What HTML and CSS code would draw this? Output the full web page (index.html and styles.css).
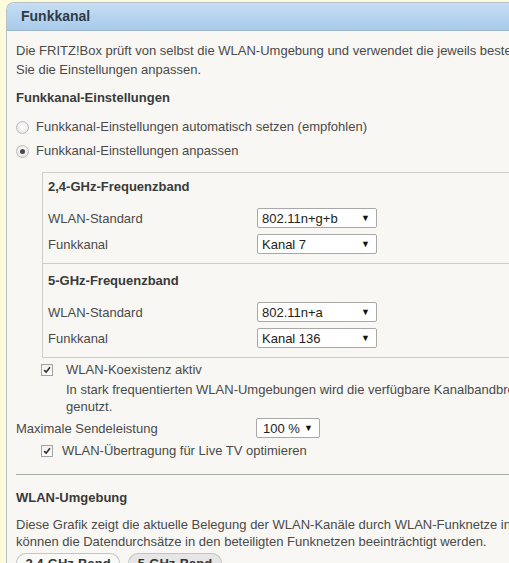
FILE: index.html
```html
<!DOCTYPE html>
<html lang="de">
<head>
<meta charset="utf-8">
<title>Funkkanal</title>
<link rel="stylesheet" href="styles.css">
</head>
<body>
<div class="panel">
  <div class="panel-head">Funkkanal</div>
  <div class="panel-body">
    <p class="intro">Die FRITZ!Box prüft von selbst die WLAN-Umgebung und verwendet die jeweils besten Funkkanäle. Bei Bedarf können<br>Sie die Einstellungen anpassen.</p>
    <h3 class="h-settings">Funkkanal-Einstellungen</h3>
    <div class="radio-row first"><span class="radio"></span><span>Funkkanal-Einstellungen automatisch setzen (empfohlen)</span></div>
    <div class="radio-row second"><span class="radio checked"></span><span>Funkkanal-Einstellungen anpassen</span></div>

    <div class="bandbox">
      <div class="band band1">
        <h4 class="band-head">2,4-GHz-Frequenzband</h4>
        <div class="field f1"><span class="label">WLAN-Standard</span><div class="select w120"><span>802.11n+g+b</span><span class="arrow">▼</span></div></div>
        <div class="field f2"><span class="label">Funkkanal</span><div class="select w120"><span>Kanal 7</span><span class="arrow">▼</span></div></div>
      </div>
      <div class="band band2">
        <h4 class="band-head">5-GHz-Frequenzband</h4>
        <div class="field f1"><span class="label">WLAN-Standard</span><div class="select w120"><span>802.11n+a</span><span class="arrow">▼</span></div></div>
        <div class="field f2"><span class="label">Funkkanal</span><div class="select w120"><span>Kanal 136</span><span class="arrow">▼</span></div></div>
      </div>
    </div>

    <div class="check-row coex"><span class="checkbox"><svg viewBox="0 0 12 12" width="12" height="12"><path d="M2.6 6.2 L5 8.6 L9.6 2.8" fill="none" stroke="#2b2b2b" stroke-width="1.9"/></svg></span><span class="ctext">WLAN-Koexistenz aktiv</span></div>
    <p class="coex-desc">In stark frequentierten WLAN-Umgebungen wird die verfügbare Kanalbandbreite nur eingeschränkt<br>genutzt.</p>
    <div class="field power"><span class="label wide">Maximale Sendeleistung</span><div class="select w64"><span>100 %</span><span class="arrow">▼</span></div></div>
    <div class="check-row livetv"><span class="checkbox"><svg viewBox="0 0 12 12" width="12" height="12"><path d="M2.6 6.2 L5 8.6 L9.6 2.8" fill="none" stroke="#2b2b2b" stroke-width="1.9"/></svg></span><span class="ctext2">WLAN-Übertragung für Live TV optimieren</span></div>

    <hr class="sep">
    <h3 class="h-env">WLAN-Umgebung</h3>
    <p class="env-desc">Diese Grafik zeigt die aktuelle Belegung der WLAN-Kanäle durch WLAN-Funknetze in Ihrer Umgebung. Überlagerungen<br>können die Datendurchsätze in den beteiligten Funknetzen beeinträchtigt werden.</p>
    <div class="tabs"><span class="tab t1">2,4-GHz-Band</span><span class="tab t2">5-GHz-Band</span></div>
  </div>
</div>
</body>
</html>
```
FILE: styles.css
```css
html, body {
  margin: 0;
  padding: 0;
  height: 563px;
  overflow: hidden;
}
body {
  background: #fcfcdc;
  font-family: "Liberation Sans", Arial, sans-serif;
  font-size: 13px;
  color: #4a4a4a;
}
.panel {
  margin: 2px 0 0 6px;
  width: 640px;
  height: 600px;
  border: 1px solid #b8bfc6;
  border-right: none;
  border-radius: 8px 0 0 0;
  background: #f8f7f3;
  overflow: hidden;
}
.panel-head {
  height: 27px;
  line-height: 27px;
  padding-left: 14px;
  font-size: 14px;
  font-weight: bold;
  color: #2f3b47;
  background: linear-gradient(#c6ddf2, #a8cbeb);
  border-bottom: 1px solid #9fb7cc;
}
.panel-body {
  padding: 10px 0 0 9px;
}
p, h3, h4 { margin: 0; }
.intro {
  line-height: 19px;
  white-space: nowrap;
}
h3, h4 {
  font-size: 13px;
  font-weight: bold;
  color: #3a3a3a;
  line-height: 18px;
}
.h-settings { margin-top: 10px; }
.radio-row {
  display: flex;
  align-items: center;
  line-height: 18px;
  white-space: nowrap;
}
.radio-row.first { margin-top: 11px; }
.radio-row.second { margin-top: 6px; }
.radio {
  box-sizing: border-box;
  width: 13px;
  height: 13px;
  border-radius: 50%;
  border: 1px solid #b9b9b9;
  background: radial-gradient(circle at 50% 40%, #fdfdfd, #e2e2e2);
  margin-right: 7px;
  display: flex;
  align-items: center;
  justify-content: center;
}
.radio.checked::after {
  content: "";
  width: 5px;
  height: 5px;
  border-radius: 50%;
  background: #4a4a4a;
}
.bandbox {
  margin: 12px 0 0 26px;
  border-top: 1px solid #cdcdcd;
  border-left: 1px solid #cdcdcd;
  border-bottom: 1px solid #cdcdcd;
}
.band {
  padding: 5px 0 9px 5px;
}
.band2 {
  border-top: 1px solid #cdcdcd;
  padding-top: 8px;
}
.field {
  display: flex;
  align-items: center;
  height: 20px;
}
.field.f1 { margin-top: 12px; }
.field.f2 { margin-top: 6px; }
.label {
  width: 209px;
  flex: none;
}
.label.wide { width: 240px; }
.select {
  box-sizing: border-box;
  height: 20px;
  border: 1px solid #a8a8a8;
  border-radius: 2px;
  background: #fff;
  color: #222;
  display: flex;
  align-items: center;
  justify-content: space-between;
  padding: 0 6px 0 4px;
  white-space: nowrap;
}
.w120 { width: 120px; }
.w64 { width: 64px; padding-left: 6px; }
.arrow {
  font-size: 9px;
  color: #111;
}
.check-row {
  display: flex;
  align-items: center;
  line-height: 18px;
  padding-left: 25px;
  white-space: nowrap;
}
.check-row.coex { margin-top: 3px; }
.check-row.livetv { margin-top: 4px; }
.checkbox {
  box-sizing: border-box;
  width: 12px;
  height: 12px;
  border: 1px solid #a3a3a3;
  background: linear-gradient(#f0f0f0, #ffffff);
  display: flex;
  align-items: center;
  justify-content: center;
  flex: none;
}
.checkbox svg { display: block; width: 10px; height: 10px; }
.ctext { margin-left: 13px; }
.ctext2 { margin-left: 9px; }
.coex-desc {
  margin: 2px 0 0 50px;
  line-height: 17px;
  white-space: nowrap;
}
.field.power { margin-top: 3px; }
.sep {
  margin: 14px 0 0 0;
  border: none;
  border-top: 1px solid #a7b0a7;
  height: 0;
}
.h-env { margin-top: 14px; }
.env-desc {
  margin-top: 9px;
  line-height: 17px;
  white-space: nowrap;
}
.tabs {
  margin-top: 3px;
  display: flex;
  gap: 8px;
}
.tab {
  box-sizing: border-box;
  height: 24px;
  padding-top: 2px;
  line-height: 16px;
  border: 1px solid #c4c4c4;
  border-bottom: none;
  border-radius: 10px 10px 0 0;
  font-weight: bold;
  color: #333;
  text-align: center;
}
.t1 { width: 104px; background: #f9f9f7; }
.t2 { width: 94px; background: #e6e6e6; }
```
